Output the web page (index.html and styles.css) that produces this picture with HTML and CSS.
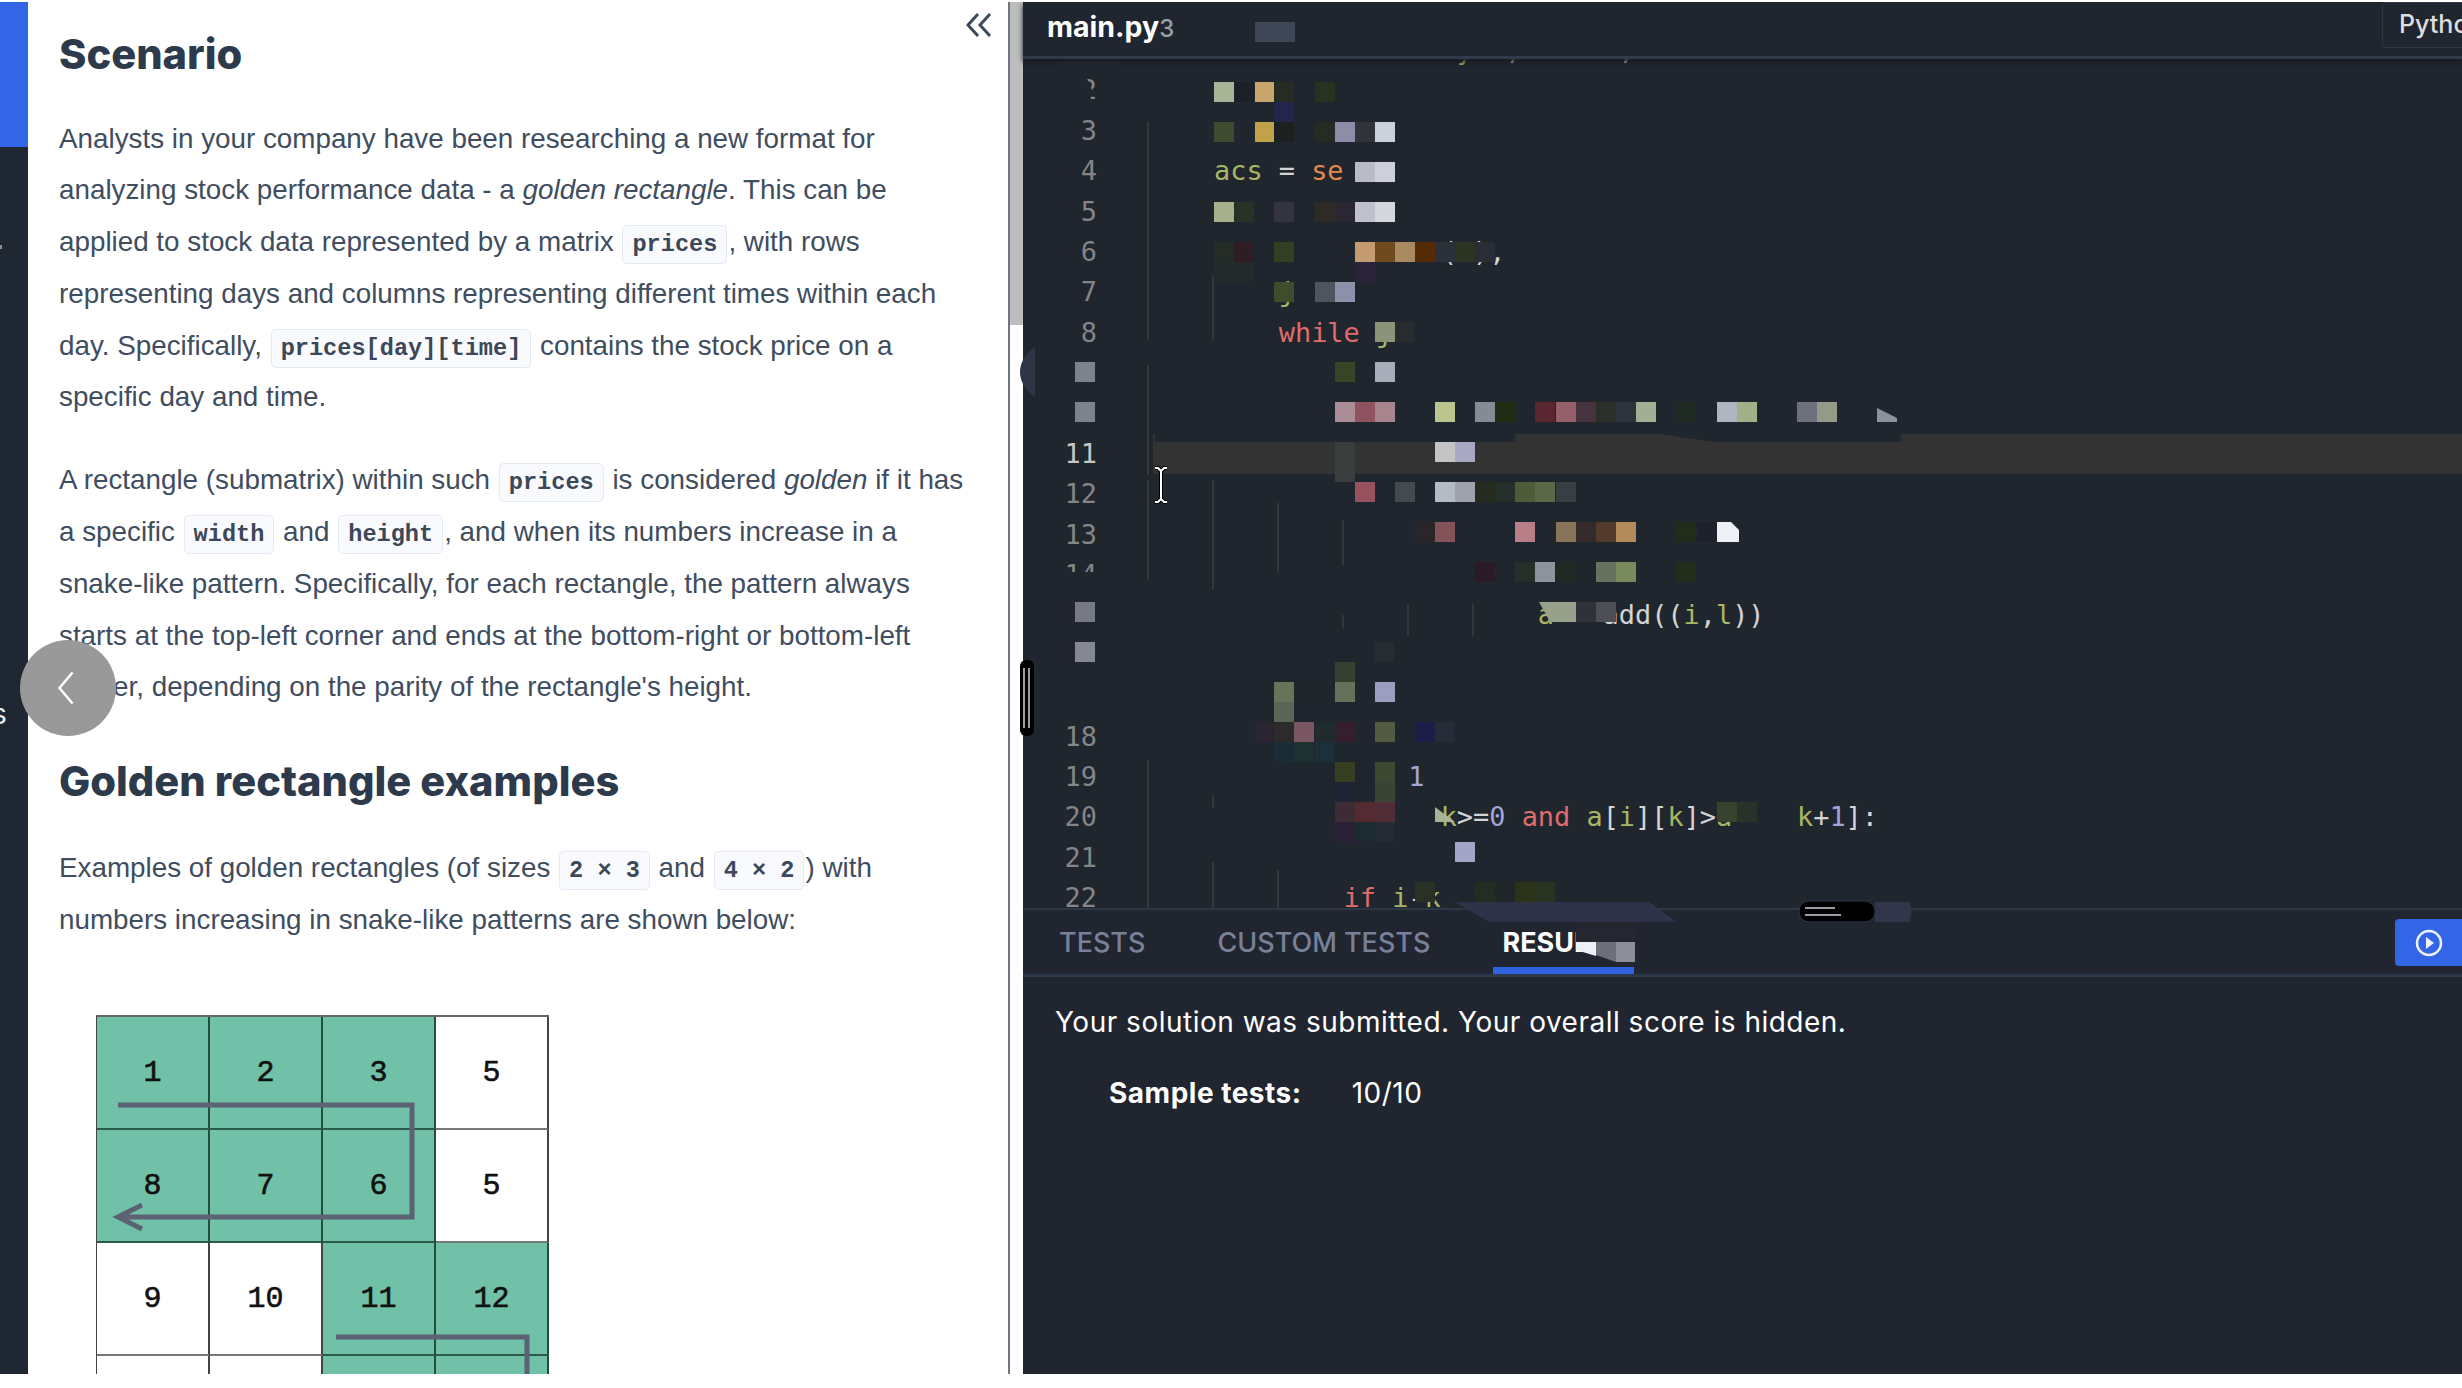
FILE: index.html
```html
<!DOCTYPE html>
<html>
    <head>
        <title>Golden rectangle</title>
        <link rel="stylesheet" href="styles.css">
    </head>
    <body>
        <div class="app">
            <div class="sidebar">
                <div class="side-active"></div>
                <div class="side-tick"></div>
                <div class="side-label">s</div>
            </div>
            <div class="problem">
                <svg class="collapse" viewBox="0 0 26 24"><path d="M12 1 2 12l10 11M24 1 14 12l10 11"/></svg>
                <h2>Scenario</h2>
                <p>Analysts in your company have been researching a new format for analyzing stock performance data - a <em>golden rectangle</em>. This can be applied to stock data represented by a matrix <code>prices</code>, with rows representing days and columns representing different times within each day. Specifically, <code>prices[day][time]</code> contains the stock price on a specific day and time.</p>
                <p>A rectangle (submatrix) within such <code>prices</code> is considered <em>golden</em> if it has a specific <code>width</code> and <code>height</code>, and when its numbers increase in a snake-like pattern. Specifically, for each rectangle, the pattern always starts at the top-left corner and ends at the bottom-right or bottom-left corner, depending on the parity of the rectangle's height.</p>
                <h2 class="second">Golden rectangle examples</h2>
                <p>Examples of golden rectangles (of sizes <code>2 &times; 3</code> and <code>4 &times; 2</code>) with numbers increasing in snake-like patterns are shown below:</p>
                <div class="matrix">
                    <div class="cell on">1</div><div class="cell on">2</div><div class="cell on">3</div><div class="cell">5</div>
                    <div class="cell on">8</div><div class="cell on">7</div><div class="cell on">6</div><div class="cell">5</div>
                    <div class="cell">9</div><div class="cell">10</div><div class="cell on">11</div><div class="cell on">12</div>
                    <div class="cell"></div><div class="cell"></div><div class="cell on"></div><div class="cell on"></div>
                    <svg class="snake" viewBox="0 0 452 452">
                        <path d="M21 88H315V200H24M45 188 21 200l24 12"/>
                        <path d="M239 320H430V452"/>
                    </svg>
                </div>
            </div>
            <div class="back-button">
                <svg viewBox="0 0 24 44"><path d="M20 3 4 22l16 19"/></svg>
            </div>
            <div class="scrollbar"><div class="scrollbar-thumb"></div></div>
            <div class="workspace">
                <div class="file-bar">
                    <span class="file-name">main.py<span class="file-ghost">3</span></span>
                    <span class="lang">Python3</span>
                </div>
                <div class="code">
                    <div class="code-lines">
                        <div class="line"><span class="num">1</span><span class="src">               <b class="g">y</b>  <b class="w">,</b>      <b class="w">,</b></span></div>
                        <div class="line"><span class="num">2</span><span class="src"></span></div>
                        <div class="line"><span class="num">3</span><span class="src"></span></div>
                        <div class="line"><span class="num">4</span><span class="src"><b class="g">acs</b> = <b class="o">se</b></span></div>
                        <div class="line"><span class="num">5</span><span class="src"></span></div>
                        <div class="line"><span class="num">6</span><span class="src">             <b class="o">e</b>(n),</span></div>
                        <div class="line"><span class="num">7</span><span class="src">    <b class="g">j</b></span></div>
                        <div class="line"><span class="num">8</span><span class="src">    <b class="r">while</b> <b class="g">j</b></span></div>
                        <div class="line"><span class="num">9</span><span class="src"></span></div>
                        <div class="line"><span class="num">10</span><span class="src">                    <b class="r">and</b></span></div>
                        <div class="line is-active"><span class="num">11</span><span class="src"></span></div>
                        <div class="line"><span class="num">12</span><span class="src"></span></div>
                        <div class="line"><span class="num">13</span><span class="src"></span></div>
                        <div class="line"><span class="num">14</span><span class="src"></span></div>
                        <div class="line"><span class="num">15</span><span class="src">                    <b class="g">a</b>   add((<b class="g">i</b>,<b class="g">l</b>))</span></div>
                        <div class="line"><span class="num">16</span><span class="src"></span></div>
                        <div class="line"><span class="num">17</span><span class="src"></span></div>
                        <div class="line"><span class="num">18</span><span class="src"></span></div>
                        <div class="line"><span class="num">19</span><span class="src">            <b class="p">1</b></span></div>
                        <div class="line"><span class="num">20</span><span class="src">              <b class="g">k</b>&gt;=<b class="p">0</b> <b class="r">and</b> <b class="g">a</b>[<b class="g">i</b>][<b class="g">k</b>]&gt;<b class="g">a</b>    <b class="g">k</b>+<b class="p">1</b>]:</span></div>
                        <div class="line"><span class="num">21</span><span class="src"></span></div>
                        <div class="line"><span class="num">22</span><span class="src">        <b class="r">if</b> <b class="g">i</b>-<b class="g">k</b></span></div>
                    </div>
                </div>
                <div class="panel-tabs">
                    <span class="tab">TESTS</span>
                    <span class="tab">CUSTOM TESTS</span>
                    <span class="tab tab-on">RESULTS</span>
                    <div class="run-button">
                        <svg viewBox="0 0 28 28"><circle cx="14" cy="14" r="12"/><path class="tri" d="M11 8l8 6-8 6z"/></svg>
                    </div>
                </div>
                <div class="results">
                    <p class="results-note">Your solution was submitted. Your overall score is hidden.</p>
                    <div class="score"><span class="score-label">Sample tests:</span><span>10/10</span></div>
                </div>

                <!-- scrambled parts of the recording, drawn in page coordinates -->
                <svg class="mosaic" viewBox="1024 2 1438 1372">
                    <g class="guides">
                        <path d="M1149 122V340M1149 365V475M1149 480V580M1149 760V908"/>
                        <path d="M1214 275V340M1214 480V590M1214 795V808M1214 862V908"/>
                        <path d="M1279 503V572M1279 870V908"/>
                        <path d="M1344 520V565M1344 615V628"/>
                        <path d="M1409 604V636M1474 604V636"/>
                    </g>
                    <g class="cover">
                        <path d="M1060 62h60v8h-40v40h-20z"/>
                        <path d="M1060 70h24v40h-24z"/>
                        <path d="M1083 110V76h4l6 14-3 20z"/>
                        <path d="M1060 345h70v92h-70z"/>
                        <path d="M1060 572h70v150h-70z"/>
                        <path d="M1156 422H1902V442H1715L1660 434H1516V442H1156z"/>
                        <path d="M1460 268h120v8h-120z"/>
                    </g>
                    <path class="half" d="M1036 347C1016 360 1016 384 1036 397z"/>
                    <g class="blocks">
                        <rect x="1256" y="22" fill="#3f4656"/><rect x="1276" y="22" fill="#3f4656"/>
                        <rect x="1215" y="82" fill="#a9b497"/><rect x="1235" y="82" fill="#1c2029"/><rect x="1256" y="82" fill="#c8a56a"/><rect x="1275" y="82" fill="#272c22"/><rect x="1316" y="82" fill="#28331f"/>
                        <rect x="1275" y="102" fill="#22264a"/>
                        <rect x="1215" y="122" fill="#3f4a2e"/><rect x="1256" y="122" fill="#c0a24b"/><rect x="1275" y="122" fill="#1c211f"/><rect x="1316" y="122" fill="#242c24"/><rect x="1336" y="122" fill="#8d8da8"/><rect x="1356" y="122" fill="#30343a"/><rect x="1376" y="122" fill="#cdd1dc"/>
                        <rect x="1356" y="162" fill="#b9bcc6"/><rect x="1376" y="162" fill="#cdd0da"/>
                        <rect x="1215" y="202" fill="#a6b18a"/><rect x="1235" y="202" fill="#263326"/><rect x="1275" y="202" fill="#33343f"/><rect x="1316" y="202" fill="#2e2b26"/><rect x="1336" y="202" fill="#2a2733"/><rect x="1356" y="202" fill="#bec1cb"/><rect x="1376" y="202" fill="#d4d7de"/>
                        <rect x="1215" y="242" fill="#232c26"/><rect x="1235" y="242" fill="#2e1d24"/><rect x="1275" y="242" fill="#353f24"/><rect x="1356" y="242" fill="#c49a70"/><rect x="1376" y="242" fill="#6f4a20"/><rect x="1396" y="242" fill="#a88a63"/><rect x="1416" y="242" fill="#552c05"/><rect x="1436" y="242" fill="#2c3038"/><rect x="1456" y="242" fill="#2c3423"/><rect x="1476" y="242" fill="#2a2d36"/>
                        <rect x="1215" y="262" fill="#24292a"/><rect x="1235" y="262" fill="#24292a"/><rect x="1356" y="262" fill="#2a2438"/>
                        <rect x="1275" y="282" fill="#414c2d"/><rect x="1316" y="282" fill="#4f545f"/><rect x="1336" y="282" fill="#8f90ab"/>
                        <rect x="1376" y="322" fill="#8b9478"/><rect x="1396" y="322" fill="#282c2f"/>
                        <rect x="1076" y="362" fill="#7e828c"/><rect x="1336" y="362" fill="#3a4426"/><rect x="1376" y="362" fill="#a9adb9"/>
                        <rect x="1076" y="402" fill="#7e828c"/><rect x="1336" y="402" fill="#a98c96"/><rect x="1356" y="402" fill="#8f535f"/><rect x="1376" y="402" fill="#a8848e"/><rect x="1436" y="402" fill="#bcc490"/><rect x="1476" y="402" fill="#868a94"/><rect x="1497" y="402" fill="#222b14"/><rect x="1536" y="402" fill="#5a2630"/><rect x="1557" y="402" fill="#95606a"/><rect x="1577" y="402" fill="#463540"/><rect x="1597" y="402" fill="#2a3029"/><rect x="1617" y="402" fill="#2f333c"/><rect x="1637" y="402" fill="#a3ae94"/><rect x="1677" y="402" fill="#1f2b22"/><rect x="1718" y="402" fill="#b0b4c0"/><rect x="1738" y="402" fill="#a3b087"/><rect x="1798" y="402" fill="#6d717d"/><rect x="1818" y="402" fill="#939a86"/>
                        <rect x="1336" y="442" fill="#3a3d3e"/><rect x="1436" y="442" fill="#c4c4c4"/><rect x="1456" y="442" fill="#a9a8c4"/><rect x="1336" y="462" fill="#3a3d3e"/>
                        <rect x="1356" y="482" fill="#96525f"/><rect x="1396" y="482" fill="#444a4f"/><rect x="1436" y="482" fill="#b6bac4"/><rect x="1456" y="482" fill="#9ea2ac"/><rect x="1476" y="482" fill="#252c1f"/><rect x="1497" y="482" fill="#25302a"/><rect x="1516" y="482" fill="#4e5a38"/><rect x="1536" y="482" fill="#5d6849"/><rect x="1557" y="482" fill="#3a3f46"/>
                        <rect x="1416" y="522" fill="#2a2528"/><rect x="1436" y="522" fill="#845259"/><rect x="1516" y="522" fill="#b97f88"/><rect x="1557" y="522" fill="#877358"/><rect x="1577" y="522" fill="#332a2b"/><rect x="1597" y="522" fill="#523a2c"/><rect x="1617" y="522" fill="#b38a5a"/><rect x="1677" y="522" fill="#232b1b"/><rect x="1698" y="522" fill="#1c212b"/>
                        <rect x="1476" y="562" fill="#2b1a27"/><rect x="1516" y="562" fill="#262f2a"/><rect x="1536" y="562" fill="#8f939c"/><rect x="1557" y="562" fill="#1f2b22"/><rect x="1597" y="562" fill="#68705f"/><rect x="1617" y="562" fill="#798a5f"/><rect x="1677" y="562" fill="#232d19"/>
                        <rect x="1076" y="602" fill="#777a85"/><rect x="1577" y="602" fill="#2f323a"/><rect x="1597" y="602" fill="#4d4f55"/>
                        <rect x="1076" y="642" fill="#858892"/><rect x="1376" y="642" fill="#272c30"/>
                        <rect x="1336" y="662" fill="#363f30"/>
                        <rect x="1275" y="682" fill="#68745a"/><rect x="1295" y="682" fill="#1f272a"/><rect x="1336" y="682" fill="#66715a"/><rect x="1376" y="682" fill="#9d9dc0"/>
                        <rect x="1275" y="702" fill="#5b6555"/>
                        <rect x="1256" y="722" fill="#2a2530"/><rect x="1275" y="722" fill="#2b2b2b"/><rect x="1295" y="722" fill="#7a5662"/><rect x="1316" y="722" fill="#1f2b2d"/><rect x="1336" y="722" fill="#361f2c"/><rect x="1376" y="722" fill="#525b41"/><rect x="1416" y="722" fill="#1b1f48"/><rect x="1436" y="722" fill="#262b37"/>
                        <rect x="1275" y="742" fill="#1b2b38"/><rect x="1295" y="742" fill="#1f3030"/><rect x="1316" y="742" fill="#1d2f38"/>
                        <rect x="1336" y="762" fill="#373f22"/><rect x="1376" y="762" fill="#3d4732"/>
                        <rect x="1336" y="782" fill="#1f2536"/><rect x="1376" y="782" fill="#3a4336"/>
                        <rect x="1336" y="802" fill="#3d2c36"/><rect x="1356" y="802" fill="#552b33"/><rect x="1376" y="802" fill="#512c36"/><rect x="1718" y="802" fill="#37422f"/><rect x="1738" y="802" fill="#2a3128"/>
                        <rect x="1336" y="822" fill="#2a2138"/><rect x="1356" y="822" fill="#1d2b30"/><rect x="1376" y="822" fill="#232a33"/>
                        <rect x="1456" y="842" fill="#a3a4c8"/>
                        <rect x="1416" y="882" fill="#293024"/><rect x="1476" y="882" fill="#252d22"/><rect x="1497" y="882" fill="#1d2628"/><rect x="1516" y="882" fill="#2a3319"/><rect x="1536" y="882" fill="#2b3322"/>
                    </g>
                    <path d="M1540 602h37v20h-26z" fill="#97a089"/>
                    <path d="M1436 807l20 15h-20z" fill="#a9b497"/>
                    <path class="shard" d="M1456 902H1650L1678 922H1490z"/>
                    <rect class="strap" x="1800" y="901" width="76" height="21" rx="10"/>
                    <path class="strap-end" d="M1876 902h34q5 10 0 20h-34z"/>
                    <path class="strap-lines" d="M1806 908h30M1806 915h36"/>
                    <path class="cover2" d="M1577 922h59v20h-59z"/>
                    <path class="white-bit" d="M1577 942h20v14l-20-6z"/>
                    <path d="M1597 942h20v20l-20-7z" fill="#6d7079"/>
                    <path d="M1617 942h19v20h-19z" fill="#8c8f97"/>
                    <path class="white-bit" d="M1718 522h14l8 8v12h-22z"/>
                    <path d="M1878 408l20 10v4h-20z" fill="#8e919c"/>
                    <g class="ibeam">
                        <path class="ibeam-edge" d="M1156 468h3l3 3 3-3h3M1162 471v28M1156 502h3l3-3 3 3h3"/>
                        <path class="ibeam-core" d="M1156 468h3l3 3 3-3h3M1162 471v28M1156 502h3l3-3 3 3h3"/>
                    </g>
                    <rect class="handle" x="1021" y="660" width="14" height="76" rx="6"/>
                    <path class="handle-lines" d="M1025 668v60M1030 668v60"/>
                </svg>
            </div>
        </div>
    </body>
</html>
```

FILE: styles.css
```css
body {
    margin: 0;
    background: #fff;
    overflow: hidden;
}
.app {
    position: relative;
    display: flex;
    margin-top: 2px;
    height: 1372px;
    width: 2462px;
    overflow: hidden;
}

/* left rail */
.sidebar {
    width: 28px;
    flex: none;
    background: #1f2733;
    overflow: hidden;
}
.side-active {
    height: 145px;
    background: #3366e6;
}
.side-tick {
    width: 2px;
    height: 4px;
    margin-top: 98px;
    background: #8a8f98;
}
.side-label {
    margin: 448px 0 0 -8px;
    font: 28px "Inter", sans-serif;
    color: #eee;
}

/* problem text */
.problem {
    position: relative;
    width: 949px;
    flex: none;
    padding-left: 31px;
    box-sizing: content-box;
    color: #404d5f;
    font: 27.8px/51.8px "Liberation Sans", sans-serif;
}
.problem h2 {
    margin: 26px 0 32.5px;
    font: 800 41.6px/52px "Inter", sans-serif;
    color: #2d3a4c;
}
.problem h2.second {
    margin: 42px 0 34.5px;
}
.problem p {
    margin: 0 38px 31px 0;
}
.problem code {
    padding: 5px 9px;
    margin: 0 1px;
    border: 1px solid #e4e9f4;
    border-radius: 5px;
    background: #f8fafd;
    color: #3c4757;
    font: 700 23.6px "Liberation Mono", monospace;
}
.collapse {
    position: absolute;
    left: 938px;
    top: 11px;
    width: 26px;
    height: 24px;
    fill: none;
    stroke: #3d4a5c;
    stroke-width: 3;
}
.back-button {
    position: absolute;
    left: 20px;
    top: 638px;
    width: 96px;
    height: 96px;
    border-radius: 50%;
    background: #999;
    display: flex;
    align-items: center;
    justify-content: center;
}
.back-button svg {
    width: 22px;
    height: 36px;
    margin-right: 4px;
    fill: none;
    stroke: #fff;
    stroke-width: 3;
}

/* picture of the matrix */
.matrix {
    position: relative;
    display: grid;
    grid-template-columns: repeat(4, 113px);
    grid-auto-rows: 113px;
    width: 452px;
    margin: 70px 0 0 37px;
    border-top: 2px solid #666;
    border-left: 1px solid #444;
    font: 400 30px "Liberation Mono", monospace;
    -webkit-text-stroke: 0.6px #111;
    color: #111;
}
.cell {
    display: flex;
    align-items: center;
    justify-content: center;
    border-right: 2px solid #444;
    border-bottom: 2px solid #777;
    box-sizing: border-box;
}
.cell.on {
    background: #70c1a7;
    border-bottom-color: #2b5a4a;
    border-right-color: #244d40;
}
.snake {
    position: absolute;
    left: 0;
    top: 0;
    width: 452px;
    height: 452px;
    fill: none;
    stroke: #5d6174;
    stroke-width: 5;
}

.scrollbar {
    width: 15px;
    flex: none;
    border-left: 2px solid #6f7683;
    box-sizing: border-box;
}
.scrollbar-thumb {
    height: 323px;
    background: #bdbdbd;
}

/* editor side */
.workspace {
    position: relative;
    flex: 1;
    display: flex;
    flex-direction: column;
    background: #1f262e;
    color: #fff;
}
.file-bar {
    display: flex;
    align-items: flex-start;
    justify-content: space-between;
    height: 54px;
    flex: none;
    background: #20262f;
    border-bottom: 3px solid #2f3a4d;
    box-shadow: 0 3px 5px #171b21;
    z-index: 1;
}
.file-name {
    margin: 6px 0 0 24px;
    font: 700 28.5px/38px "Inter", sans-serif;
}
.file-ghost {
    color: #9aa0a8;
    font-size: 24px;
    font-weight: 500;
}
.lang {
    width: 100px;
    height: 44px;
    margin-right: -38px;
    padding-left: 16px;
    border: 1px solid #2e3644;
    border-radius: 3px;
    font: 500 25px/42px "Inter", sans-serif;
    color: #ddd;
    white-space: nowrap;
    overflow: hidden;
    flex: none;
}
.code {
    height: 849px;
    flex: none;
    overflow: hidden;
}
.code-lines {
    margin-top: -29px;
}
.line {
    display: flex;
    height: 40.4px;
    font: 26.9px/40.4px "DejaVu Sans Mono", monospace;
    color: #d4d4d4;
    white-space: pre;
}
.num {
    width: 74px;
    padding-right: 56px;
    text-align: right;
    color: #858585;
    flex: none;
}
.src {
    flex: 1;
    padding-left: 61px;
}
.is-active .num {
    color: #c6c6c6;
}
.is-active .src {
    background: #333;
}
.src b {
    font-weight: normal;
}
.src .g { color: #a9b665; }
.src .o { color: #e78a4e; }
.src .r { color: #e06c6c; }
.src .p { color: #a3a4d8; }
.panel-tabs {
    display: flex;
    align-items: stretch;
    height: 64px;
    flex: none;
    gap: 54px;
    padding-left: 27px;
    border-top: 2px solid #2c3848;
    border-bottom: 3px solid #2c3848;
    background: #20252f;
    font: 500 27px/66px "Inter", sans-serif;
    color: #79819a;
}
.tab {
    padding: 0 9px;
}
.tab-on {
    color: #fff;
    font-weight: 700;
    width: 123px;
    overflow: hidden;
    white-space: nowrap;
    border-bottom: 7px solid #2f62dd;
    box-sizing: content-box;
    height: 57px;
}
.run-button {
    margin: 9px -22px 8px auto;
    width: 69px;
    height: 47px;
    background: #3366e6;
    border-radius: 4px 0 0 4px;
    display: flex;
    align-items: center;
    padding-left: 20px;
}
.run-button svg {
    width: 28px;
    height: 28px;
    fill: none;
    stroke: #eef2ff;
    stroke-width: 2.5;
}
.run-button .tri {
    fill: #eef2ff;
    stroke: none;
}
.results {
    flex: 1;
    background: #20252f;
    padding: 25px 0 0 32px;
    font: 28px/40px "Inter", sans-serif;
    letter-spacing: 0.5px;
}
.results-note {
    margin: 0 0 31px;
}
.score {
    display: flex;
    gap: 50px;
    padding-left: 54px;
}
.score-label {
    font-weight: 700;
}

/* overlay */
.mosaic {
    position: absolute;
    left: 0;
    top: 0;
    width: 1438px;
    height: 1372px;
    overflow: visible;
    z-index: 2;
}
.blocks rect {
    width: 20px;
    height: 20px;
}
.guides path {
    fill: none;
    stroke: #3b3f45;
    stroke-width: 1.5;
}
.cover path { fill: #1f262e; }
.half { fill: #2e3547; }
.shard { fill: #2f3349; }
.strap { fill: #000; stroke: #2c3848; stroke-width: 1; }
.strap-end { fill: #31364a; }
.strap-lines { fill: none; stroke: #9a9ca3; stroke-width: 2; }
.cover2 { fill: #262630; }
.white-bit { fill: #eef0f5; }
.ibeam path { fill: none; }
.ibeam-edge { stroke: #000; stroke-width: 4; }
.ibeam-core { stroke: #fff; stroke-width: 2; }
.handle { fill: #000; }
.handle-lines { fill: none; stroke: #cfcfcf; stroke-width: 1.5; }
```
